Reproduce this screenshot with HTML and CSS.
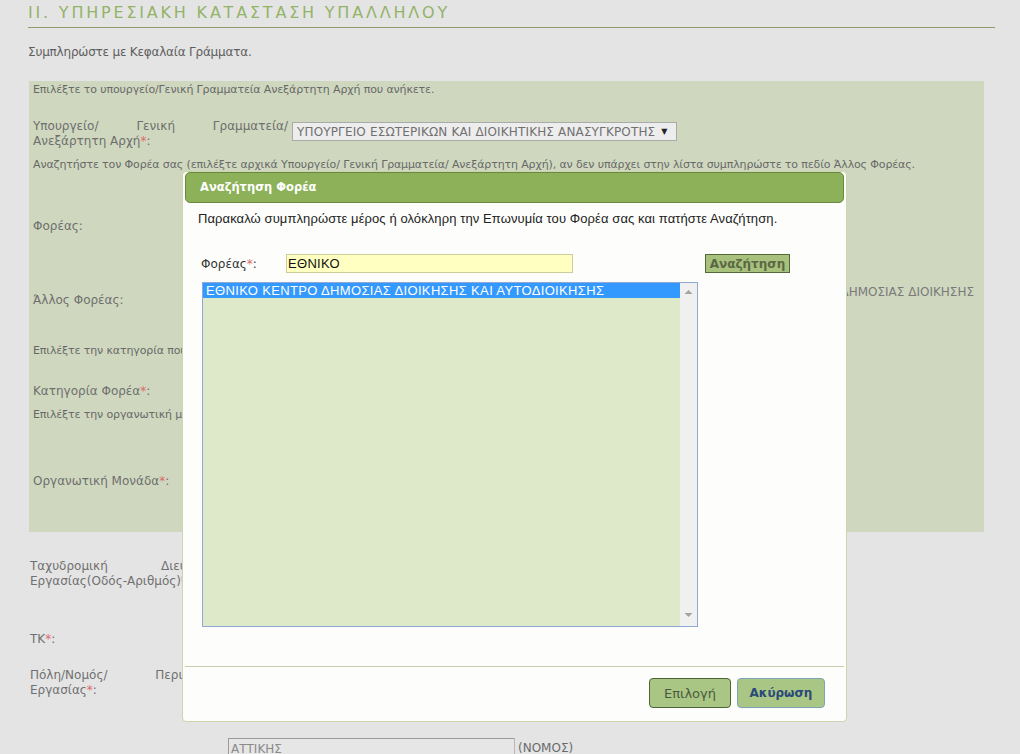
FILE: index.html
```html
<!DOCTYPE html>
<html lang="el">
<head>
<meta charset="utf-8">
<title>Υπηρεσιακή Κατάσταση Υπαλλήλου</title>
<link rel="stylesheet" href="styles.css">
</head>
<body>
<div class="page">
  <h2 class="section-title">II. ΥΠΗΡΕΣΙΑΚΗ ΚΑΤΑΣΤΑΣΗ ΥΠΑΛΛΗΛΟΥ</h2>
  <p class="intro">Συμπληρώστε με Κεφαλαία Γράμματα.</p>

  <div class="panel">
    <p class="hint hint-ministry">Επιλέξτε το υπουργείο/Γενική Γραμματεία Ανεξάρτητη Αρχή που ανήκετε.</p>
    <div class="row row-ministry">
      <label class="lbl"><span class="just">Υπουργείο/ Γενική Γραμματεία/</span>Ανεξάρτητη Αρχή<span class="req">*</span>:</label>
      <div class="field">
        <div class="select"><span class="select-text">ΥΠΟΥΡΓΕΙΟ ΕΣΩΤΕΡΙΚΩΝ ΚΑΙ ΔΙΟΙΚΗΤΙΚΗΣ ΑΝΑΣΥΓΚΡΟΤΗΣ</span><span class="caret">▼</span></div>
      </div>
    </div>
    <p class="hint hint-org">Αναζητήστε τον Φορέα σας (επιλέξτε αρχικά Υπουργείο/ Γενική Γραμματεία/ Ανεξάρτητη Αρχή), αν δεν υπάρχει στην λίστα συμπληρώστε το πεδίο Άλλος Φορέας.</p>
    <div class="row row-org">
      <label class="lbl">Φορέας:</label>
      <div class="field"></div>
    </div>
    <div class="row row-other">
      <label class="lbl">Άλλος Φορέας:</label>
      <div class="field field-other">ΕΘΝΙΚΟ ΚΕΝΤΡΟ ΔΗΜΟΣΙΑΣ ΔΙΟΙΚΗΣΗΣ</div>
    </div>
    <p class="hint hint-cat">Επιλέξτε την κατηγορία που ανήκει ο Φορέας σας.</p>
    <div class="row row-cat">
      <label class="lbl">Κατηγορία Φορέα<span class="req">*</span>:</label>
      <div class="field"></div>
    </div>
    <p class="hint hint-unit">Επιλέξτε την οργανωτική μονάδα που ανήκετε.</p>
    <div class="row row-unit">
      <label class="lbl">Οργανωτική Μονάδα<span class="req">*</span>:</label>
      <div class="field"></div>
    </div>
  </div>

  <div class="plain">
    <div class="prow prow-address">
      <label class="plbl"><span class="just">Ταχυδρομική Διεύθυνση</span>Εργασίας(Οδός-Αριθμός)<span class="req">*</span>:</label>
    </div>
    <div class="prow prow-zip">
      <label class="plbl">ΤΚ<span class="req">*</span>:</label>
    </div>
    <div class="prow prow-city">
      <label class="plbl"><span class="just">Πόλη/Νομός/ Περιφέρεια</span>Εργασίας<span class="req">*</span>:</label>
    </div>
    <div class="prow prow-county">
      <span class="plbl"></span>
      <div class="pfield"><span class="textbox">ΑΤΤΙΚΗΣ</span><span class="suffix">(ΝΟΜΟΣ)</span></div>
    </div>
  </div>
</div>

<div class="dialog" role="dialog" aria-label="Αναζήτηση Φορέα">
  <div class="dlg-title">Αναζήτηση Φορέα</div>
  <div class="dlg-body">
    <p class="dlg-msg">Παρακαλώ συμπληρώστε μέρος ή ολόκληρη την Επωνυμία του Φορέα σας και πατήστε Αναζήτηση.</p>
    <div class="dlg-search">
      <label class="dlg-lbl">Φορέας<span class="req">*</span>:</label>
      <div class="dlg-input">ΕΘΝΙΚΟ</div>
      <button class="btn-search" type="button">Αναζήτηση</button>
    </div>
    <div class="listbox">
      <div class="list-items">
        <div class="opt selected">ΕΘΝΙΚΟ ΚΕΝΤΡΟ ΔΗΜΟΣΙΑΣ ΔΙΟΙΚΗΣΗΣ ΚΑΙ ΑΥΤΟΔΙΟΙΚΗΣΗΣ</div>
      </div>
      <div class="scrollbar">
        <svg class="arrow" width="9" height="6" viewBox="0 0 9 6"><path d="M0.5 5 L4.5 1 L8.5 5 Z" fill="#a3a3a3"/></svg>
        <svg class="arrow" width="9" height="6" viewBox="0 0 9 6"><path d="M0.5 1 L4.5 5 L8.5 1 Z" fill="#a3a3a3"/></svg>
      </div>
    </div>
  </div>
  <div class="dlg-foot">
    <button class="btn btn-ok" type="button">Επιλογή</button>
    <button class="btn btn-cancel" type="button">Ακύρωση</button>
  </div>
</div>
</body>
</html>
```

FILE: styles.css
```css
html, body {
  margin: 0;
  padding: 0;
}

body {
  width: 1020px;
  height: 754px;
  overflow: hidden;
  position: relative;
  background: #e4e4e4;
  font-family: "DejaVu Sans", Verdana, sans-serif;
  color: #666;
}

.page {
  padding: 0 25px 0 28px;
}

.section-title {
  margin: 0;
  padding: 3px 0 5px 0;
  font-size: 16px;
  line-height: 19px;
  font-weight: normal;
  letter-spacing: 2.8px;
  color: #93b368;
  border-bottom: 1px solid #8f9c70;
  white-space: nowrap;
}

.intro {
  margin: 17px 0 0 0;
  font-size: 12px;
  line-height: 15px;
  letter-spacing: -0.2px;
  color: #5e5e5e;
}

.req {
  color: #e06a6a;
}

/* green panel */
.panel {
  margin: 21px 11px 0 1px;
  height: 451px;
  box-sizing: border-box;
  padding: 2px 4px 0 4px;
  background: #cfd8bf;
}

.hint {
  margin: 0;
  font-size: 11px;
  line-height: 14px;
  letter-spacing: -0.13px;
  color: #686868;
  white-space: nowrap;
}

.row {
  display: flex;
  align-items: flex-start;
}

.lbl {
  flex: 0 0 255px;
  font-size: 12px;
  line-height: 15px;
  color: #6e6e6e;
}

.just {
  display: block;
  text-align: justify;
  text-align-last: justify;
}

.field {
  flex: 1;
  margin-left: 4px;
}

.row-ministry { margin-top: 22px; }
.hint-org { margin-top: 9px; }
.row-org { margin-top: 47px; }
.row-other { margin-top: 51px; }
.row-other .lbl { margin-top: 8px; }
.hint-cat { margin-top: 36px; }
.row-cat { margin-top: 26px; }
.hint-unit { margin-top: 9px; }
.row-unit { margin-top: 52px; }

.select {
  display: inline-flex;
  align-items: center;
  box-sizing: border-box;
  width: 385px;
  height: 19px;
  margin-top: 3px;
  padding: 0 0 0 4px;
  border: 1px solid #aaa;
  background: #ededed;
  font-size: 12px;
  color: #707070;
  white-space: nowrap;
  overflow: hidden;
}

.select-text {
  letter-spacing: 0.15px;
}

.caret {
  margin-left: 6px;
  font-size: 8px;
  color: #222;
}

.field-other {
  text-align: right;
  padding-right: 6px;
  font-size: 12px;
  line-height: 14px;
  color: #7a7a7a;
  white-space: nowrap;
}

/* rows below the panel */
.plain {
  padding-left: 2px;
}

.prow {
  display: flex;
  align-items: flex-start;
}

.plbl {
  flex: 0 0 193px;
  font-size: 12px;
  line-height: 15px;
  color: #707070;
}

.prow-address { margin-top: 27px; }
.prow-zip { margin-top: 43px; }
.prow-city { margin-top: 21px; }
.prow-county { margin-top: 40px; }

.pfield {
  display: flex;
  align-items: center;
  margin-left: 5px;
}

.textbox {
  box-sizing: border-box;
  width: 287px;
  height: 20px;
  padding: 2px 2px 0 2px;
  border: 1px solid #b8b8b8;
  border-top-color: #9a9a9a;
  border-left-color: #9a9a9a;
  background: #e6e6e6;
  font-size: 12px;
  line-height: 16px;
  color: #8a8a8a;
}

.suffix {
  margin-left: 3px;
  font-size: 12px;
  color: #6a6a6a;
}

/* modal dialog */
.dialog {
  position: absolute;
  left: 182px;
  top: 171px;
  width: 665px;
  height: 551px;
  box-sizing: border-box;
  display: flex;
  flex-direction: column;
  border: 1px solid #cbd5ae;
  border-radius: 4px;
  background: #fdfefb;
}

.dlg-title {
  flex: 0 0 auto;
  margin: 0 2px;
  height: 31px;
  box-sizing: border-box;
  padding-left: 14px;
  border: 1px solid #6a8842;
  border-radius: 5px;
  background: #8cb158;
  color: #fff;
  font-weight: bold;
  font-size: 11.5px;
  line-height: 28px;
}

.dlg-body {
  flex: 1;
  padding: 8px 0 0 15px;
}

.dlg-msg {
  margin: 0;
  font-family: "Liberation Sans", Arial, sans-serif;
  font-size: 13px;
  line-height: 16px;
  letter-spacing: 0.09px;
  color: #222;
}

.dlg-search {
  display: flex;
  align-items: center;
  margin-top: 27px;
  padding-left: 3px;
}

.dlg-lbl {
  flex: 0 0 85px;
  font-size: 12px;
  color: #333;
}

.dlg-input {
  box-sizing: border-box;
  width: 287px;
  height: 19px;
  padding-left: 1px;
  border: 1px solid #cdcd9c;
  background: #ffffc2;
  font-family: "Liberation Sans", Arial, sans-serif;
  font-size: 13px;
  line-height: 17px;
  letter-spacing: 0.3px;
  color: #111;
}

.btn-search {
  margin: 0 0 0 132px;
  box-sizing: border-box;
  width: 85px;
  height: 19px;
  padding: 0;
  border: 1px solid #56683a;
  background: #a8c17c;
  font-family: "DejaVu Sans", Verdana, sans-serif;
  font-weight: bold;
  font-size: 12px;
  line-height: 16px;
  color: #5a6845;
}

.listbox {
  display: flex;
  box-sizing: border-box;
  width: 496px;
  height: 345px;
  margin: 9px 0 0 4px;
  border: 1px solid #8fa8d6;
  background: #dde9c9;
}

.list-items {
  flex: 1;
}

.opt {
  height: 15px;
  padding-left: 3px;
  font-family: "Liberation Sans", Arial, sans-serif;
  font-size: 13px;
  line-height: 15px;
  letter-spacing: 0.35px;
  white-space: nowrap;
}

.opt.selected {
  background: #3399ff;
  color: #fff;
}

.scrollbar {
  flex: 0 0 17px;
  display: flex;
  flex-direction: column;
  justify-content: space-between;
  align-items: center;
  padding: 6px 0 8px 0;
  background: #f0f0f0;
}

.dlg-foot {
  flex: 0 0 55px;
  box-sizing: border-box;
  margin: 0 2px;
  display: flex;
  justify-content: flex-end;
  align-items: flex-start;
  gap: 6px;
  padding: 11px 19px 0 0;
  border-top: 1px solid #c9cfae;
}

.btn {
  box-sizing: border-box;
  height: 30px;
  padding: 0;
  border-radius: 4px;
  background: #a9c684;
  font-family: "DejaVu Sans", Verdana, sans-serif;
  cursor: pointer;
}

.btn-ok {
  width: 82px;
  border: 1px solid #4d6434;
  font-size: 13px;
  color: #4b5a3e;
}

.btn-cancel {
  width: 88px;
  border: 1px solid #7ea2b6;
  font-size: 12px;
  font-weight: bold;
  color: #2c4a78;
}
```
